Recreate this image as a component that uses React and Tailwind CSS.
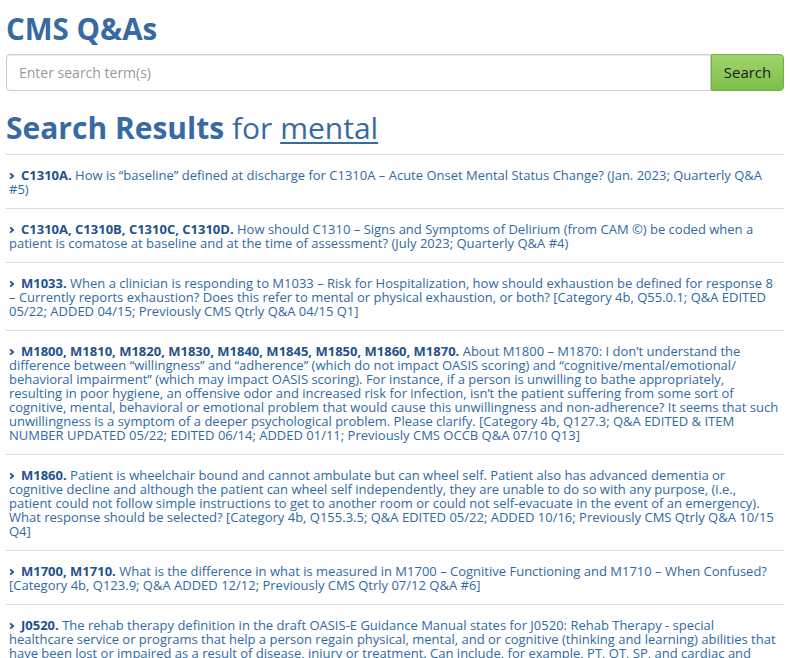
import React from 'react';

const results = [
  {
    code: "C1310A.",
    text: "How is “baseline” defined at discharge for C1310A – Acute Onset Mental Status Change? (Jan. 2023; Quarterly Q&A #5)",
  },
  {
    code: "C1310A, C1310B, C1310C, C1310D.",
    text: "How should C1310 – Signs and Symptoms of Delirium (from CAM ©) be coded when a patient is comatose at baseline and at the time of assessment? (July 2023; Quarterly Q&A #4)",
  },
  {
    code: "M1033.",
    text: "When a clinician is responding to M1033 – Risk for Hospitalization, how should exhaustion be defined for response 8 – Currently reports exhaustion? Does this refer to mental or physical exhaustion, or both? [Category 4b, Q55.0.1; Q&A EDITED 05/22; ADDED 04/15; Previously CMS Qtrly Q&A 04/15 Q1]",
  },
  {
    code: "M1800, M1810, M1820, M1830, M1840, M1845, M1850, M1860, M1870.",
    text: "About M1800 – M1870: I don’t understand the difference between “willingness” and “adherence” (which do not impact OASIS scoring) and “cognitive/mental/emotional/ behavioral impairment” (which may impact OASIS scoring). For instance, if a person is unwilling to bathe appropriately, resulting in poor hygiene, an offensive odor and increased risk for infection, isn’t the patient suffering from some sort of cognitive, mental, behavioral or emotional problem that would cause this unwillingness and non-adherence? It seems that such unwillingness is a symptom of a deeper psychological problem. Please clarify. [Category 4b, Q127.3; Q&A EDITED & ITEM NUMBER UPDATED 05/22; EDITED 06/14; ADDED 01/11; Previously CMS OCCB Q&A 07/10 Q13]",
  },
  {
    code: "M1860.",
    text: "Patient is wheelchair bound and cannot ambulate but can wheel self. Patient also has advanced dementia or cognitive decline and although the patient can wheel self independently, they are unable to do so with any purpose, (i.e., patient could not follow simple instructions to get to another room or could not self-evacuate in the event of an emergency). What response should be selected? [Category 4b, Q155.3.5; Q&A EDITED 05/22; ADDED 10/16; Previously CMS Qtrly Q&A 10/15 Q4]",
  },
  {
    code: "M1700, M1710.",
    text: "What is the difference in what is measured in M1700 – Cognitive Functioning and M1710 – When Confused? [Category 4b, Q123.9; Q&A ADDED 12/12; Previously CMS Qtrly 07/12 Q&A #6]",
  },
  {
    code: "J0520.",
    text: "The rehab therapy definition in the draft OASIS-E Guidance Manual states for J0520: Rehab Therapy - special healthcare service or programs that help a person regain physical, mental, and or cognitive (thinking and learning) abilities that have been lost or impaired as a result of disease, injury or treatment. Can include, for example, PT, OT, SP, and cardiac and pulmonary rehabilitation. Does this include all therapy services? [Category 4b; Q&A ADDED 2023]",
  },
];

function Chevron() {
  return (
    <svg viewBox="0 0 8 10" className="inline-block w-[6px] h-[8px] mr-[6px] align-[0px]">
      <path d="M1.5 1.5 L5.5 5 L1.5 8.5" fill="none" stroke="#23518c" strokeWidth="2.4" />
    </svg>
  );
}

export default function App() {
  return (
    <div className="min-h-screen bg-white px-[6px] pt-[11px] font-['Open_Sans',sans-serif] text-[#2f6aa3]">
      <h1 className="text-[29.5px] font-bold leading-[36px] text-[#376aa2]">CMS Q&amp;As</h1>

      <div className="flex mt-[7px] h-[37px]">
        <input
          type="text"
          placeholder="Enter search term(s)"
          className="flex-1 h-full border border-[#cccccc] rounded-l-[4px] px-[12px] text-[14px] text-[#555] placeholder:text-[#999] outline-none shadow-[inset_0_1px_1px_rgba(0,0,0,0.075)]"
        />
        <button className="h-full w-[73px] rounded-r-[4px] border border-[#72b043] bg-gradient-to-b from-[#a1d46e] to-[#7bbf47] text-[15px] text-[#1a1a1a]">
          Search
        </button>
      </div>

      <h2 className="mt-[17px] text-[30px] leading-[40px] text-[#376aa2]">
        <span className="font-bold">Search Results</span>{" "}
        <span>for</span>{" "}
        <span className="underline decoration-[2px] underline-offset-[3px]">mental</span>
      </h2>

      <ul className="mt-[6px] border-t border-[#dddddd]">
        {results.map((r, i) => (
          <li key={i} className="border-b border-[#dddddd] pl-[3px] pr-[5px] pt-[13px] pb-[12px] text-[13px] leading-[14px]">
            <Chevron />
            <span className="font-bold text-[#23518c]">{r.code}</span>{" "}
            <span>{r.text}</span>
          </li>
        ))}
      </ul>
    </div>
  );
}
